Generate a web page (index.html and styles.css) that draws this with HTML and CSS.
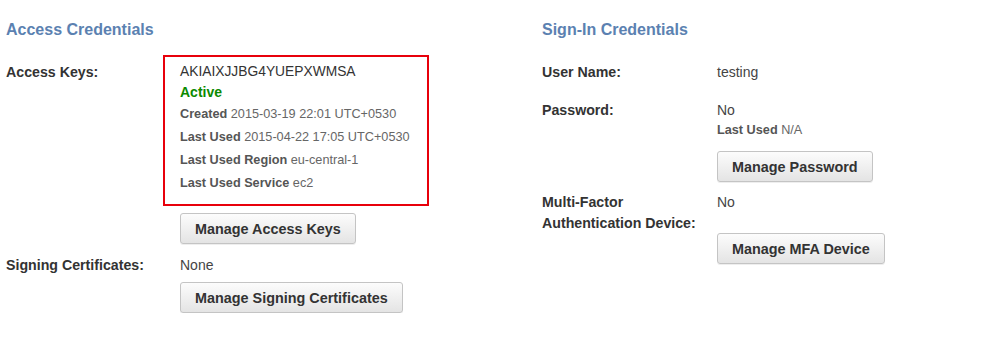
FILE: index.html
```html
<!DOCTYPE html>
<html>
<head>
<meta charset="utf-8">
<link rel="stylesheet" href="styles.css">
</head>
<body>
<div class="page">
  <section class="col col-left">
    <h2 class="heading">Access Credentials</h2>
    <div class="row row-keys">
      <div class="label label-keys">Access Keys:</div>
      <div class="value">
        <div class="keybox">
          <div class="key-id">AKIAIXJJBG4YUEPXWMSA</div>
          <div class="status">Active</div>
          <div class="meta"><b>Created</b> 2015-03-19 22:01 UTC+0530</div>
          <div class="meta"><b>Last Used</b> 2015-04-22 17:05 UTC+0530</div>
          <div class="meta"><b>Last Used Region</b> eu-central-1</div>
          <div class="meta"><b>Last Used Service</b> ec2</div>
        </div>
        <button class="btn btn-keys">Manage Access Keys</button>
      </div>
    </div>
    <div class="row row-certs">
      <div class="label">Signing Certificates:</div>
      <div class="value">
        <div class="text">None</div>
        <button class="btn btn-certs">Manage Signing Certificates</button>
      </div>
    </div>
  </section>
  <section class="col col-right">
    <h2 class="heading">Sign-In Credentials</h2>
    <div class="row row-user">
      <div class="label">User Name:</div>
      <div class="value"><div class="text">testing</div></div>
    </div>
    <div class="row row-pass">
      <div class="label">Password:</div>
      <div class="value">
        <div class="text">No</div>
        <div class="meta"><b>Last Used</b> N/A</div>
        <button class="btn btn-pass">Manage Password</button>
      </div>
    </div>
    <div class="row row-mfa">
      <div class="label label-mfa">Multi-Factor<br>Authentication Device:</div>
      <div class="value">
        <div class="text text-mfa">No</div>
        <button class="btn btn-mfa">Manage MFA Device</button>
      </div>
    </div>
  </section>
</div>
</body>
</html>
```
FILE: styles.css
```css
* { box-sizing: border-box; }
html, body { margin: 0; padding: 0; background: #fff; }
body {
  font-family: "Liberation Sans", Arial, sans-serif;
  font-size: 14px;
  color: #444;
}
.page {
  display: flex;
  padding: 20px 0 0 6px;
}
.col-left { width: 536px; }
.col-right { width: 420px; }
.heading {
  margin: 0;
  font-size: 16px;
  line-height: 20px;
  font-weight: bold;
  color: #5b81b1;
}
.row { display: flex; }
.label {
  width: 174px;
  flex: none;
  font-size: 14.2px;
  font-weight: bold;
  color: #333;
  line-height: 20px;
}
.col-right .label { width: 175px; }
.value { display: flex; flex-direction: column; align-items: flex-start; }
.text { line-height: 20px; color: #444; }

.row-keys { margin-top: 15px; }
.label-keys { padding-top: 7px; }
.keybox {
  margin-left: -17px;
  width: 266px;
  border: 2px solid #e8000b;
  padding: 5px 10px 9px 15px;
}
.key-id { line-height: 20px; font-size: 13.8px; color: #333; }
.status { line-height: 21px; font-weight: bold; color: #0b8a00; }
.meta {
  font-size: 12.7px;
  line-height: 23px;
  color: #666;
}
.meta b { color: #555; }

.btn {
  font-family: "Liberation Sans", Arial, sans-serif;
  font-size: 14.4px;
  font-weight: bold;
  color: #333;
  height: 31px;
  padding: 0 14px;
  border: 1px solid #c4c4c4;
  border-radius: 3px;
  background: linear-gradient(#fcfcfc, #e4e4e4);
  box-shadow: 0 1px 0 #eee;
  cursor: pointer;
}
.btn-keys { margin-top: 7px; }
.row-certs { margin-top: 11px; }
.btn-certs { margin-top: 7px; }

.row-user { margin-top: 22px; }
.row-pass { margin-top: 18px; }
.row-pass .meta { line-height: 21px; }
.btn-pass { margin-top: 10px; }
.row-mfa { margin-top: 10px; }
.label-mfa, .text-mfa { line-height: 21px; }
.btn-mfa { margin-top: 20px; }
```
